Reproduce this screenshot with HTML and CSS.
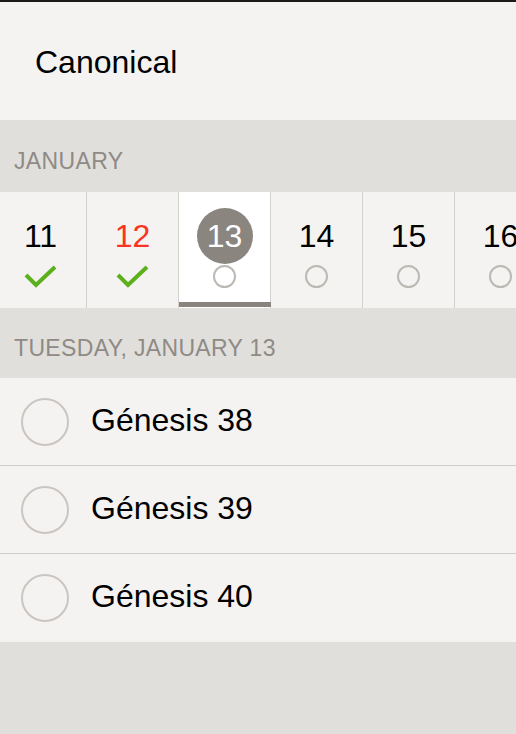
FILE: index.html
```html
<!DOCTYPE html>
<html lang="en">
<head>
    <meta charset="UTF-8">
    <meta name="viewport" content="width=device-width, initial-scale=1.0">
    <title>Canonical</title>
    <link rel="stylesheet" href="styles.css">
</head>
<body>
    <div class="status-line"></div>

    <header class="title-bar">
        <h1>Canonical</h1>
    </header>

    <div class="section-label month-label">JANUARY</div>

    <div class="day-strip">
        <div class="day">
            <div class="day-number">11</div>
            <div class="day-mark">
                <svg width="34" height="24" viewBox="0 0 34 24"><polyline points="2,11 12,21 31,3" fill="none" stroke="#5cb01c" stroke-width="4"/></svg>
            </div>
        </div>
        <div class="day">
            <div class="day-number today">12</div>
            <div class="day-mark">
                <svg width="34" height="24" viewBox="0 0 34 24"><polyline points="2,11 12,21 31,3" fill="none" stroke="#5cb01c" stroke-width="4"/></svg>
            </div>
        </div>
        <div class="day selected">
            <div class="day-number">13</div>
            <div class="day-mark"><span class="dot"></span></div>
        </div>
        <div class="day">
            <div class="day-number">14</div>
            <div class="day-mark"><span class="dot"></span></div>
        </div>
        <div class="day">
            <div class="day-number">15</div>
            <div class="day-mark"><span class="dot"></span></div>
        </div>
        <div class="day">
            <div class="day-number">16</div>
            <div class="day-mark"><span class="dot"></span></div>
        </div>
    </div>

    <div class="section-label date-label">TUESDAY, JANUARY 13</div>

    <ul class="readings">
        <li class="reading"><span class="check"></span><span class="reading-name">Génesis 38</span></li>
        <li class="reading"><span class="check"></span><span class="reading-name">Génesis 39</span></li>
        <li class="reading"><span class="check"></span><span class="reading-name">Génesis 40</span></li>
    </ul>
</body>
</html>
```

FILE: styles.css
```css
body {
    margin: 0;
    height: 734px;
    overflow: hidden;
    font-family: "Liberation Sans", Arial, sans-serif;
    background-color: #e0dfdc;
    color: #000000;
}

.status-line {
    height: 2px;
    background-color: #1c1a1a;
}

.title-bar {
    height: 118px;
    box-sizing: border-box;
    padding: 45px 0 0 35px;
    background-color: #f4f3f1;
}

.title-bar h1 {
    margin: 0;
    font-size: 32px;
    line-height: 31px;
    font-weight: normal;
}

.section-label {
    box-sizing: border-box;
    padding-left: 14px;
    font-size: 23px;
    line-height: 23px;
    letter-spacing: 0.35px;
    color: #8f8a85;
    background-color: #e0dfdc;
}

.month-label {
    height: 72px;
    padding-top: 30px;
}

.date-label {
    height: 70px;
    padding-top: 29px;
}

/* fila de dias */
.day-strip {
    display: flex;
    height: 116px;
    margin-left: -5px;
    background-color: #f4f3f1;
    overflow: hidden;
}

.day {
    flex: 0 0 91px;
    border-right: 1px solid #d4d1cd;
    display: flex;
    flex-direction: column;
    align-items: center;
    padding-top: 16px;
    position: relative;
}

.day.selected {
    background-color: #ffffff;
}

.day.selected::after {
    content: "";
    position: absolute;
    left: 0;
    right: -1px;
    bottom: 1px;
    height: 5px;
    background-color: #8a847f;
}

.day-number {
    width: 56px;
    height: 56px;
    line-height: 56px;
    text-align: center;
    font-size: 32px;
    border-radius: 50%;
}

.day-number.today {
    color: #fc3322;
}

.selected .day-number {
    background-color: #8b8580;
    color: #ffffff;
}

.day-mark {
    height: 24px;
    display: flex;
    align-items: center;
    justify-content: center;
}

.day-mark svg {
    display: block;
}

.dot {
    width: 19px;
    height: 19px;
    border: 2px solid #bcb8b4;
    border-radius: 50%;
}

/* lista de leituras */
.readings {
    margin: 0;
    padding: 0;
    list-style: none;
}

.reading {
    height: 87px;
    display: flex;
    align-items: center;
    background-color: #f4f3f1;
    border-bottom: 1px solid #d0ccc8;
}

.reading:last-child {
    height: 88px;
    border-bottom: none;
}

.check {
    width: 44px;
    height: 44px;
    margin-left: 21px;
    border: 2px solid #cac5c1;
    border-radius: 50%;
}

.reading-name {
    margin-left: 22px;
    padding-bottom: 3px;
    font-size: 32px;
    line-height: 31px;
}
```
